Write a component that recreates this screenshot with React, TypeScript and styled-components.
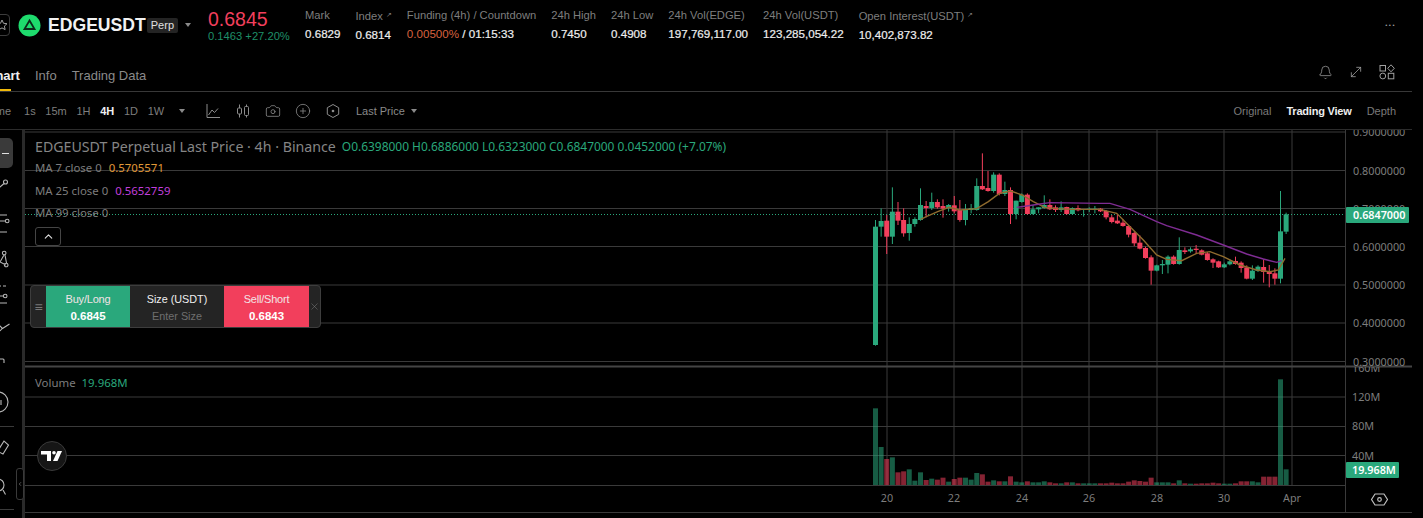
import React from 'react';
import styled, { createGlobalStyle } from 'styled-components';
import { Bell, Camera, ChevronLeft, ChevronUp, CirclePlus, MoveDiagonal, X } from 'lucide-react';

const GREEN = '#2aa87c';
const RED = '#f23f5c';
const GRID = '#3a3a3a';
const AXIS = '#7d7d7d';
const CHART_FONT = '"Noto Sans", "Liberation Sans", sans-serif';

const stats = [
  { label: 'Mark', value: '0.6829' },
  { label: 'Index', value: '0.6814', arrow: true },
  { label: 'Funding (4h) / Countdown', value: '0.00500%', extra: ' / 01:15:33' },
  { label: '24h High', value: '0.7450' },
  { label: '24h Low', value: '0.4908' },
  { label: '24h Vol(EDGE)', value: '197,769,117.00' },
  { label: '24h Vol(USDT)', value: '123,285,054.22' },
  { label: 'Open Interest(USDT)', value: '10,402,873.82', arrow: true },
];

const intervals = ['1s', '15m', '1H', '4H', '1D', '1W'];

// bodyTop, bodyBottom, wickTop, wickBottom, up (y read off the chart at 3x, from y=130)
const candles: [number, number, number, number, number][] = [
  [290, 645, 270, 647, 1], [273, 290, 235, 320, 1], [272, 320, 255, 372, 0], [245, 320, 172, 342, 1],
  [245, 272, 216, 285, 0], [270, 310, 235, 320, 0], [282, 309, 262, 332, 1], [267, 282, 262, 290, 1],
  [225, 270, 175, 272, 1], [228, 234, 213, 262, 0], [216, 234, 188, 240, 1], [216, 232, 208, 236, 0],
  [228, 236, 208, 263, 0], [225, 235, 222, 245, 1], [226, 244, 198, 250, 0], [240, 270, 210, 275, 0],
  [240, 270, 222, 286, 1], [234, 240, 222, 250, 1], [168, 240, 145, 242, 1], [168, 178, 70, 180, 0],
  [174, 183, 123, 185, 0], [134, 183, 127, 188, 1], [134, 192, 130, 196, 0], [180, 192, 155, 198, 1],
  [180, 252, 172, 282, 0], [212, 252, 212, 268, 1], [194, 216, 190, 218, 1], [194, 252, 190, 254, 0],
  [238, 252, 225, 254, 1], [232, 238, 232, 250, 1], [225, 234, 196, 236, 1], [225, 238, 208, 240, 0],
  [232, 240, 226, 246, 0], [232, 240, 214, 246, 1], [231, 252, 230, 254, 0], [234, 252, 232, 254, 1],
  [234, 241, 226, 244, 0], [237, 240, 237, 260, 1], [236, 239, 232, 246, 1], [236, 238, 228, 250, 1],
  [236, 244, 234, 246, 0], [243, 262, 240, 268, 0], [262, 276, 255, 280, 0], [272, 280, 252, 282, 0],
  [278, 288, 268, 290, 0], [288, 314, 285, 322, 0], [309, 340, 305, 348, 0], [338, 356, 316, 358, 0],
  [354, 384, 350, 386, 0], [382, 422, 376, 464, 0], [406, 422, 404, 424, 1], [402, 406, 390, 432, 1],
  [380, 404, 376, 430, 1], [380, 402, 376, 404, 0], [360, 402, 322, 404, 1], [361, 366, 352, 372, 0],
  [358, 364, 352, 368, 1], [356, 360, 345, 372, 0], [361, 374, 358, 376, 0], [370, 390, 366, 392, 0],
  [388, 398, 385, 414, 0], [394, 412, 392, 414, 0], [403, 412, 398, 414, 1], [394, 403, 388, 406, 1],
  [393, 402, 380, 404, 0], [398, 414, 394, 428, 0], [412, 446, 406, 448, 0], [422, 446, 406, 450, 1],
  [410, 423, 406, 426, 1], [411, 426, 388, 458, 0], [423, 432, 405, 472, 0], [430, 446, 415, 464, 0],
  [304, 446, 183, 460, 1], [253, 305, 248, 312, 1],
];

// top of each volume bar, same 3x reading, from y=365 (bottom is 360)
const volumes = [
  130, 246, 282, 277, 322, 319, 313, 347, 322, 345, 341, 344, 338, 350, 342, 338, 338, 344, 324, 328,
  350, 346, 349, 349, 334, 350, 352, 349, 352, 352, 349, 352, 355, 355, 352, 352, 355, 355, 355, 355,
  355, 355, 353, 355, 355, 350, 346, 348, 350, 338, 352, 352, 352, 355, 346, 355, 356, 356, 355, 355,
  353, 355, 356, 356, 355, 349, 349, 349, 352, 335, 335, 335, 43, 313,
];

const ma7 = [
  [182, 268], [199, 260], [233, 245], [267, 232], [300, 240], [350, 236], [385, 215], [418, 190],
  [452, 183], [486, 195], [520, 215], [554, 232], [588, 236], [640, 238], [720, 238], [770, 250],
  [810, 290], [850, 330], [890, 375], [920, 388], [965, 392], [1010, 370], [1050, 365], [1090, 380],
  [1140, 405], [1190, 420], [1230, 425], [1255, 420], [1275, 385],
];

const ma25 = [
  [470, 232], [500, 228], [540, 222], [570, 218], [720, 220], [750, 220], [810, 238], [890, 275],
  [920, 287], [1010, 315], [1090, 345], [1160, 372], [1210, 387], [1250, 397], [1265, 392],
];

const candleX = (i: number) => 875.5 + 5.625 * i;
const toPoints = (line: number[][]) => line.map(([x, y]) => `${860 + x / 3},${130 + y / 3}`).join(' ');

const priceGrid = [132, 170.5, 208.5, 246.5, 285, 323, 361.5];
const priceLabels = ['0.9000000', '0.8000000', '0.7000000', '0.6000000', '0.5000000', '0.4000000', '0.3000000'];
const volumeGrid = [397, 426.5, 455.5];
const volumeLabels = ['160M', '120M', '80M', '40M'];
const dayLines = [887, 954, 1022, 1089, 1157, 1224, 1292];
const dayLabels = ['20', '22', '24', '26', '28', '30', 'Apr'];

const ChartCanvas = () => (
  <ChartSvg viewBox="25 130 1387 388">
    <defs>
      <clipPath id="price-axis">
        <rect x="1346" y="130" width="66" height="236" />
      </clipPath>
      <clipPath id="volume-axis">
        <rect x="1346" y="367" width="66" height="118" />
      </clipPath>
    </defs>

    {priceGrid.map((y) => (
      <line key={y} x1="25" x2="1345" y1={y} y2={y} stroke={GRID} />
    ))}
    {volumeGrid.map((y) => (
      <line key={y} x1="25" x2="1345" y1={y} y2={y} stroke={GRID} />
    ))}
    {dayLines.map((x) => (
      <line key={x} x1={x} x2={x} y1="130" y2="485" stroke={GRID} />
    ))}
    <line x1="25" x2="1412" y1="366.5" y2="366.5" stroke="#444" strokeWidth="2" />
    <line x1="25" x2="1345" y1="485.5" y2="485.5" stroke={GRID} />
    <line x1="25" x2="1412" y1="512.5" y2="512.5" stroke={GRID} />
    <line x1="1345.5" x2="1345.5" y1="130" y2="512" stroke={GRID} />

    <line x1="25" x2="1345" y1="214.5" y2="214.5" stroke={GREEN} strokeDasharray="1 2" />

    {volumes.map((top, i) => (
      <rect
        key={i}
        x={candleX(i) - 2.5}
        y={365 + top / 3}
        width="5"
        height={120 - top / 3}
        fill={candles[i][4] ? GREEN : RED}
        fillOpacity="0.55"
      />
    ))}

    {candles.map(([bodyTop, bodyBottom, wickTop, wickBottom, up], i) => (
      <g key={i} fill={up ? GREEN : RED}>
        <rect x={candleX(i) - 0.5} y={130 + wickTop / 3} width="1" height={(wickBottom - wickTop) / 3} />
        <rect x={candleX(i) - 2.5} y={130 + bodyTop / 3} width="5" height={(bodyBottom - bodyTop) / 3} />
      </g>
    ))}

    <polyline points={toPoints(ma7)} fill="none" stroke="#8f6b2e" strokeWidth="1.4" />
    <polyline points={toPoints(ma25)} fill="none" stroke="#7f2c93" strokeWidth="1.4" />

    <AxisText>
      <g clipPath="url(#price-axis)">
        {priceLabels.map((label, i) => (
          <text key={label} x="1353" y={priceGrid[i] + 4}>{label}</text>
        ))}
      </g>
      <g clipPath="url(#volume-axis)">
        {volumeLabels.map((label, i) => (
          <text key={label} x="1352" y={[372, 401, 430, 459.5][i]}>{label}</text>
        ))}
      </g>
      {dayLabels.map((label, i) => (
        <text key={label} x={dayLines[i]} y="502" textAnchor="middle">{label}</text>
      ))}
    </AxisText>

    <rect x="1346" y="207" width="63" height="16" rx="1" fill={GREEN} />
    <AxisBadge x="1353" y="219">0.6847000</AxisBadge>
    <rect x="1346" y="462" width="53" height="16" rx="1" fill={GREEN} />
    <AxisBadge x="1352" y="474">19.968M</AxisBadge>

    <path
      d="M1375 494h9l3.500 5.500-3.500 5.500h-9l-3.500-5.500z"
      fill="none"
      stroke="#c0c0c0"
      strokeWidth="1.2"
      strokeLinejoin="round"
    />
    <circle cx="1379.500" cy="499.500" r="1.800" fill="none" stroke="#c0c0c0" strokeWidth="1.2" />
  </ChartSvg>
);

const LogoMark = () => (
  <svg width="23" height="23" viewBox="0 0 23 23">
    <circle cx="11.5" cy="11.5" r="11" fill="#1edb6d" />
    <path d="M11.5 6.5l5 8.5h-10z" fill="none" stroke="#0c2a1a" strokeWidth="1.8" />
  </svg>
);

const StarIcon = () => (
  <svg width="12" height="12" viewBox="0 0 12 12">
    <path
      d="M6 1l1.5 3.3 3.5.4-2.6 2.4.7 3.5L6 8.9l-3.1 1.7.7-3.5L1 4.7l3.5-.4z"
      fill="none"
      stroke="#a0a0a0"
      strokeWidth="1"
    />
  </svg>
);

const LineIcon = () => (
  <svg width="16" height="16" viewBox="0 0 16 16" fill="none" stroke="#8c8c8c">
    <path d="M2 1v13.5h13M3.5 12l3.5-5 2.5 2.5 3.5-4" />
  </svg>
);

const CandleIcon = () => (
  <svg width="16" height="16" viewBox="0 0 16 16" fill="none" stroke="#8c8c8c">
    <path d="M4.5 1.5v13M11.5 1.5v13" />
    <rect x="2.5" y="5" width="4" height="6" rx="1" fill="#000" />
    <rect x="9.5" y="3.5" width="4" height="9" rx="1" fill="#000" />
  </svg>
);

const HexDotIcon = () => (
  <svg width="16" height="16" viewBox="0 0 16 16" fill="none" stroke="#8c8c8c">
    <path d="M8 1.5l5.7 3.2v6.6L8 14.5l-5.7-3.2V4.7z" />
    <circle cx="8" cy="8" r="1.3" fill="#8c8c8c" stroke="none" />
  </svg>
);

const LayoutIcon = () => (
  <svg width="16" height="16" viewBox="0 0 16 16" fill="none" stroke="#a0a0a0">
    <rect x="1" y="1.5" width="5.5" height="5.5" />
    <path d="M12 .8l3.3 3.5L12 7.8 8.7 4.3z" />
    <circle cx="3.8" cy="12" r="2.9" />
    <rect x="9.3" y="9.3" width="5.5" height="5.5" />
  </svg>
);

// left rail tools, cut off by the window edge
const railTools = [
  { h: 28, d: 'M6.500 8a2 2 0 1 1 0 4 2 2 0 0 1 0-4zM5 11.500L0 16' },
  { h: 44, d: 'M0 7h8M0 13h6M0 24h8M10 13a1.800 1.800 0 1 1-3.600 0 1.800 1.800 0 0 1 3.600 0z' },
  { h: 36, d: 'M5 7L1 14l6 3M6 7l1.500 8M7 5a1.800 1.800 0 1 1-3.600 0 1.800 1.800 0 0 1 3.600 0zM9 17a1.800 1.800 0 1 1-3.600 0 1.800 1.800 0 0 1 3.600 0z' },
  { h: 34, d: 'M0 3h2M4 3h3M0 13h4M0 20h8M8 13a1.800 1.800 0 1 1-3.600 0 1.800 1.800 0 0 1 3.600 0z' },
  { h: 30, d: 'M0 10l3.500 3.500 7-4.500M1 16l2.500-3' },
  { h: 40, d: 'M0 9h4a1 1 0 0 1 1 1v3' },
  { h: 46, d: 'M-1 -1a10 10 0 0 1 0 20M2 7v5' },
];

const railToolsBelow = [
  { h: 36, d: 'M0 14l5-8 4.500 4L4 19l-4-2' },
  { h: 46, d: 'M-1 3a6 6 0 0 1 0 12M4 14l2.500 4.500' },
];

const RailIcon = ({ d }: { d: string }) => (
  <RailSvg width="20" height="20" viewBox="0 0 20 20" fill="none" stroke="#b8b8b8" strokeWidth="1.1">
    <path d={d} />
  </RailSvg>
);

const App = () => (
  <Page>
    <GlobalStyle />
    <Header>
      <StarBox><StarIcon /></StarBox>
      <LogoMark />
      <Symbol>EDGEUSDT</Symbol>
      <PerpTag>Perp</PerpTag>
      <HeaderCaret />
      <PriceBlock>
        <LastPrice>0.6845</LastPrice>
        <PriceChange>0.1463 +27.20%</PriceChange>
      </PriceBlock>
      <Stats>
        {stats.map((stat) => (
          <Stat key={stat.label}>
            <StatLabel>
              {stat.label}
              {stat.arrow && <StatArrow>↗</StatArrow>}
            </StatLabel>
            <StatValue>
              {stat.extra ? <FundingRate>{stat.value}</FundingRate> : stat.value}
              {stat.extra}
            </StatValue>
          </Stat>
        ))}
      </Stats>
      <MoreDots>•••</MoreDots>
    </Header>

    <Tabs>
      <Tab $active>Chart</Tab>
      <Tab>Info</Tab>
      <Tab>Trading Data</Tab>
      <TabIcons>
        <Bell size={15} strokeWidth={1.2} />
        <MoveDiagonal size={16} strokeWidth={1.2} />
        <LayoutIcon />
      </TabIcons>
    </Tabs>

    <Toolbar>
      <TimeLabel>Time</TimeLabel>
      {intervals.map((item) => (
        <Interval key={item} $active={item === '4H'}>{item}</Interval>
      ))}
      <ToolCaret />
      <ToolIcons>
        <LineIcon />
        <CandleIcon />
        <Camera size={16} strokeWidth={1.2} />
        <CirclePlus size={16} strokeWidth={1.2} />
        <HexDotIcon />
      </ToolIcons>
      <LastPriceSelect>Last Price<Caret /></LastPriceSelect>
      <Views>
        <View>Original</View>
        <View $active>Trading View</View>
        <View>Depth</View>
      </Views>
    </Toolbar>

    <Body>
      <Rail>
        <RailActive><RailDash /></RailActive>
        {railTools.map((tool) => (
          <RailSlot key={tool.d} $h={tool.h}><RailIcon d={tool.d} /></RailSlot>
        ))}
        <RailDivider />
        {railToolsBelow.map((tool) => (
          <RailSlot key={tool.d} $h={tool.h}><RailIcon d={tool.d} /></RailSlot>
        ))}
        <RailDivider />
      </Rail>
      <CollapseHandle><ChevronLeft size={10} /></CollapseHandle>

      <ChartArea>
        <ChartCanvas />
        <Legend>
          <TitleRow>
            <ChartTitle>EDGEUSDT Perpetual Last Price · 4h · Binance</ChartTitle>
            <Ohlc>O0.6398000 H0.6886000 L0.6323000 C0.6847000 0.0452000 (+7.07%)</Ohlc>
          </TitleRow>
          <MaRow>MA 7 close 0<MaValue $color="#e29a37">0.5705571</MaValue></MaRow>
          <MaRow>MA 25 close 0<MaValue $color="#c13fdc">0.5652759</MaValue></MaRow>
          <MaRow>MA 99 close 0</MaRow>
          <LegendToggle><ChevronUp size={13} /></LegendToggle>
        </Legend>

        <TradePanel>
          <PanelGrip>≡</PanelGrip>
          <TradeButton $bg={GREEN} $w={84}>Buy/Long<b>0.6845</b></TradeButton>
          <SizeField>
            Size (USDT)
            <SizeHint>Enter Size</SizeHint>
          </SizeField>
          <TradeButton $bg={RED} $w={85}>Sell/Short<b>0.6843</b></TradeButton>
          <PanelClose><X size={11} strokeWidth={1} /></PanelClose>
        </TradePanel>

        <VolumeLegend>Volume<VolumeValue>19.968M</VolumeValue></VolumeLegend>

        <TvBadge>
          <svg width="22" height="12" viewBox="0 0 22 12" fill="#fff">
            <path d="M0 1h10v10H6V4.500H0z" />
            <circle cx="13" cy="2.800" r="1.800" />
            <path d="M21 1l-4.500 10H12l4.500-10z" />
          </svg>
        </TvBadge>
      </ChartArea>
    </Body>
  </Page>
);

const GlobalStyle = createGlobalStyle`
  html, body {
    margin: 0;
    background: #000;
  }
`;

const Page = styled.div`
  width: 1423px;
  height: 518px;
  overflow: hidden;
  display: flex;
  flex-direction: column;
  background: #000;
  color: #eaecef;
  font-family: "Liberation Sans", Arial, sans-serif;
`;

const Header = styled.header`
  height: 60px;
  display: flex;
  align-items: center;
  padding-bottom: 10px;
  box-sizing: border-box;
  flex: none;
`;

const StarBox = styled.div`
  width: 24px;
  height: 22px;
  margin-left: -14px;
  margin-right: 8px;
  padding-left: 8px;
  box-sizing: border-box;
  border: 1px solid #3c3c3c;
  border-radius: 4px;
  display: flex;
  align-items: center;
  justify-content: center;
`;

const Symbol = styled.div`
  margin-left: 7px;
  font-size: 17.6px;
  font-weight: 700;
  color: #f2f2f2;
`;

const PerpTag = styled.div`
  margin-left: 1px;
  padding: 0 4px;
  height: 15px;
  line-height: 15px;
  font-size: 11px;
  background: #242424;
  border-radius: 2px;
  color: #e0e0e0;
`;

const Caret = styled.span`
  display: inline-block;
  margin-left: 6px;
  border-left: 3.5px solid transparent;
  border-right: 3.5px solid transparent;
  border-top: 4px solid #8a8a8a;
`;

const HeaderCaret = styled(Caret)`
  margin-left: 7px;
`;

const PriceBlock = styled.div`
  margin-left: 17px;
  margin-top: 2px;
  width: 97px;
  display: flex;
  flex-direction: column;
`;

const LastPrice = styled.div`
  font-size: 19.5px;
  line-height: 20px;
  color: ${RED};
`;

const PriceChange = styled.div`
  font-size: 11.2px;
  line-height: 14px;
  color: #1f8f68;
  white-space: nowrap;
`;

const Stats = styled.div`
  display: flex;
  gap: 15px;
`;

const Stat = styled.div`
  display: flex;
  flex-direction: column;
  gap: 6.5px;
  min-width: 35px;
  white-space: nowrap;
`;

const StatLabel = styled.div`
  font-size: 11.2px;
  line-height: 12px;
  color: #7e7e7e;
`;

const StatArrow = styled.span`
  margin-left: 3px;
  font-size: 7px;
  vertical-align: 3px;
`;

const StatValue = styled.div`
  font-size: 11.6px;
  line-height: 12px;
  font-weight: 400;
  color: #eeeeee;
  -webkit-text-stroke: 0.2px #eeeeee;
`;

const FundingRate = styled.span`
  color: #d8623f;
  -webkit-text-stroke: 0;
`;

const MoreDots = styled.div`
  margin-left: auto;
  margin-right: 27px;
  font-size: 6px;
  letter-spacing: 1.5px;
  color: #9a9a9a;
`;

const Tabs = styled.nav`
  width: 1412px;
  height: 32px;
  box-sizing: border-box;
  flex: none;
  display: flex;
  align-items: flex-start;
  gap: 15px;
  padding-top: 8px;
  border-bottom: 1px solid #383838;
`;

const Tab = styled.div<{ $active?: boolean }>`
  position: relative;
  height: 23px;
  font-size: 13px;
  line-height: 16px;
  color: ${(p) => (p.$active ? '#efefef' : '#8a8a8a')};
  font-weight: ${(p) => (p.$active ? 700 : 400)};
  margin-left: ${(p) => (p.$active ? '-14px' : 0)};

  &::after {
    content: '';
    display: ${(p) => (p.$active ? 'block' : 'none')};
    position: absolute;
    left: 9px;
    bottom: 0;
    width: 16px;
    height: 2px;
    background: #f0b90b;
  }
`;

const TabIcons = styled.div`
  margin-left: auto;
  margin-top: -4px;
  margin-right: 17px;
  display: flex;
  align-items: center;
  gap: 15px;
  color: #a0a0a0;
`;

const Toolbar = styled.div`
  width: 1412px;
  height: 38px;
  box-sizing: border-box;
  flex: none;
  display: flex;
  align-items: center;
  font-size: 11px;
  color: #7e7e7e;
  border-bottom: 1px solid #2c2c2c;
`;

const TimeLabel = styled.div`
  margin-left: -13px;
  margin-right: 13px;
`;

const Interval = styled.div<{ $active?: boolean }>`
  margin-right: 9.7px;
  color: ${(p) => (p.$active ? '#f0f0f0' : '#7e7e7e')};
  font-weight: ${(p) => (p.$active ? 700 : 400)};
`;

const ToolCaret = styled(Caret)`
  margin-left: 5px;
`;

const ToolIcons = styled.div`
  display: flex;
  align-items: center;
  gap: 14px;
  margin-left: 20px;
  color: #8c8c8c;
`;

const LastPriceSelect = styled.div`
  margin-left: 15px;
  display: flex;
  align-items: center;
  color: #8a8a8a;
`;

const Views = styled.div`
  margin-left: auto;
  margin-right: 16px;
  display: flex;
  gap: 15px;
`;

const View = styled.div<{ $active?: boolean }>`
  color: ${(p) => (p.$active ? '#eeeeee' : '#7a7a7a')};
  font-weight: ${(p) => (p.$active ? 700 : 400)};
  letter-spacing: ${(p) => (p.$active ? '-0.2px' : 0)};
`;

const Body = styled.div`
  position: relative;
  flex: 1;
  display: flex;
  min-height: 0;
`;

const Rail = styled.aside`
  width: 25px;
  box-sizing: border-box;
  flex: none;
  border-right: 3px solid #2a2a2a;
  padding-top: 8px;
  overflow: hidden;
`;

const RailActive = styled.div`
  width: 13px;
  height: 30px;
  display: flex;
  align-items: center;
  border-radius: 0 5px 5px 0;
  background: #3a3a3a;
`;

const RailDash = styled.div`
  width: 7px;
  height: 1px;
  margin-left: 2px;
  background: #e0e0e0;
`;

const RailSlot = styled.div<{ $h: number }>`
  height: ${(p) => p.$h}px;
  display: flex;
  align-items: center;
  margin-left: -1px;
`;

const RailSvg = styled.svg`
  overflow: visible;
`;

const RailDivider = styled.div`
  width: 14px;
  height: 1px;
  background: #3a3a3a;
`;

const CollapseHandle = styled.div`
  position: absolute;
  left: 16px;
  top: 338px;
  width: 8px;
  height: 32px;
  box-sizing: border-box;
  display: flex;
  align-items: center;
  justify-content: center;
  background: #000;
  border: 1px solid #3a3a3a;
  border-radius: 3px;
  color: #b0b0b0;
`;

const ChartArea = styled.main`
  position: relative;
  flex: 1;
  min-width: 0;
`;

const ChartSvg = styled.svg`
  display: block;
  width: 1387px;
  height: 388px;
`;

const AxisText = styled.g`
  font-family: ${CHART_FONT};
  font-size: 10.8px;
  fill: ${AXIS};
`;

const AxisBadge = styled.text`
  font-family: ${CHART_FONT};
  font-size: 10.8px;
  font-weight: 600;
  fill: #ffffff;
`;

const Legend = styled.div`
  position: absolute;
  left: 10px;
  top: 6px;
  display: flex;
  flex-direction: column;
  align-items: flex-start;
  font-family: ${CHART_FONT};
`;

const TitleRow = styled.div`
  display: flex;
  align-items: center;
  gap: 6px;
  height: 21px;
  white-space: nowrap;
`;

const ChartTitle = styled.div`
  font-size: 14.2px;
  color: #858585;
`;

const Ohlc = styled.div`
  font-size: 11.95px;
  color: #2aa87c;
`;

const MaRow = styled.div`
  height: 22.5px;
  line-height: 22.5px;
  font-size: 11.4px;
  color: #7d7d7d;
  white-space: nowrap;
`;

const MaValue = styled.span<{ $color: string }>`
  margin-left: 7px;
  color: ${(p) => p.$color};
`;

const LegendToggle = styled.div`
  width: 26px;
  height: 19px;
  margin-top: 2px;
  box-sizing: border-box;
  display: flex;
  align-items: center;
  justify-content: center;
  border: 1px solid #454545;
  border-radius: 3px;
  background: #000;
  color: #e0e0e0;
`;

const TradePanel = styled.div`
  position: absolute;
  left: 5px;
  top: 155px;
  width: 291px;
  height: 43px;
  box-sizing: border-box;
  display: flex;
  border: 1px solid #3d3d3d;
  border-radius: 4px;
  background: #242424;
  overflow: hidden;
`;

const PanelGrip = styled.div`
  width: 15px;
  flex: none;
  display: flex;
  align-items: center;
  justify-content: center;
  font-size: 14px;
  color: #777;
`;

const TradeButton = styled.div<{ $bg: string; $w: number }>`
  width: ${(p) => p.$w}px;
  flex: none;
  display: flex;
  flex-direction: column;
  align-items: center;
  justify-content: center;
  gap: 4px;
  padding-top: 2px;
  box-sizing: border-box;
  font-size: 11px;
  line-height: 13px;
  color: #f3e3e6;
  letter-spacing: -0.2px;
  background: ${(p) => p.$bg};

  b {
    font-size: 11.5px;
    letter-spacing: 0;
    color: #fff;
  }
`;

const SizeField = styled.div`
  width: 94px;
  flex: none;
  display: flex;
  flex-direction: column;
  align-items: center;
  justify-content: center;
  gap: 4px;
  padding-top: 2px;
  box-sizing: border-box;
  font-size: 10.8px;
  line-height: 13px;
  color: #efefef;
`;

const SizeHint = styled.span`
  color: #6f6f6f;
`;

const PanelClose = styled.div`
  flex: 1;
  display: flex;
  align-items: center;
  justify-content: center;
  color: #888;
`;

const VolumeLegend = styled.div`
  position: absolute;
  left: 10px;
  top: 245px;
  font-family: ${CHART_FONT};
  font-size: 11.4px;
  line-height: 16px;
  color: #7d7d7d;
`;

const VolumeValue = styled.span`
  margin-left: 6px;
  color: #2aa87c;
`;

const TvBadge = styled.div`
  position: absolute;
  left: 12px;
  top: 311px;
  width: 30px;
  height: 30px;
  box-sizing: border-box;
  display: flex;
  align-items: center;
  justify-content: center;
  border-radius: 50%;
  border: 1px solid #3a3a3a;
  background: #161616;
`;

export default App;
